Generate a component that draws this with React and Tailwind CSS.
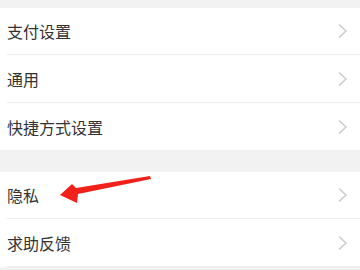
const groups = [
  [
    { label: "支付设置", h: "h-[46px]" },
    { label: "通用", h: "h-[47px]" },
    { label: "快捷方式设置", h: "h-[47px]", last: true },
  ],
  [
    { label: "隐私", h: "h-[46px]" },
    { label: "求助反馈", h: "h-[47px]" },
  ],
];

const Chevron = () => (
  <svg width="11" height="16" viewBox="0 0 11 16" className="shrink-0">
    <polyline points="2,1.5 9,8 2,14.5" fill="none" stroke="#cccccc" strokeWidth="1.5" />
  </svg>
);

const Row = ({ label, h, last }) => (
  <div className="pl-[7px] bg-white">
    <div
      className={`${h} box-content flex items-center justify-between pr-[12px] ${
        last ? "" : "border-b border-[#ececec]"
      }`}
    >
      <span className="text-[16px] text-[#333]">{label}</span>
      <Chevron />
    </div>
  </div>
);

export default function App() {
  return (
    <div
      className="relative w-[360px] h-[270px] overflow-hidden bg-[#f2f2f2] pt-[8px]"
      style={{ fontFamily: '"Noto Sans CJK SC", "Noto Sans", sans-serif' }}
    >
      <div className="flex flex-col gap-[22px]">
        {groups.map((rows, gi) => (
          <div key={gi} className="bg-white">
            {rows.map((r) => (
              <Row key={r.label} {...r} />
            ))}
          </div>
        ))}
      </div>

      {/* red arrow */}
      <svg className="absolute inset-0 pointer-events-none" width="360" height="270">
        <polygon
          points="150,176 76,188 72,184 60,195 77,203 78,194 151,179"
          fill="#f0211a"
        />
      </svg>
    </div>
  );
}
